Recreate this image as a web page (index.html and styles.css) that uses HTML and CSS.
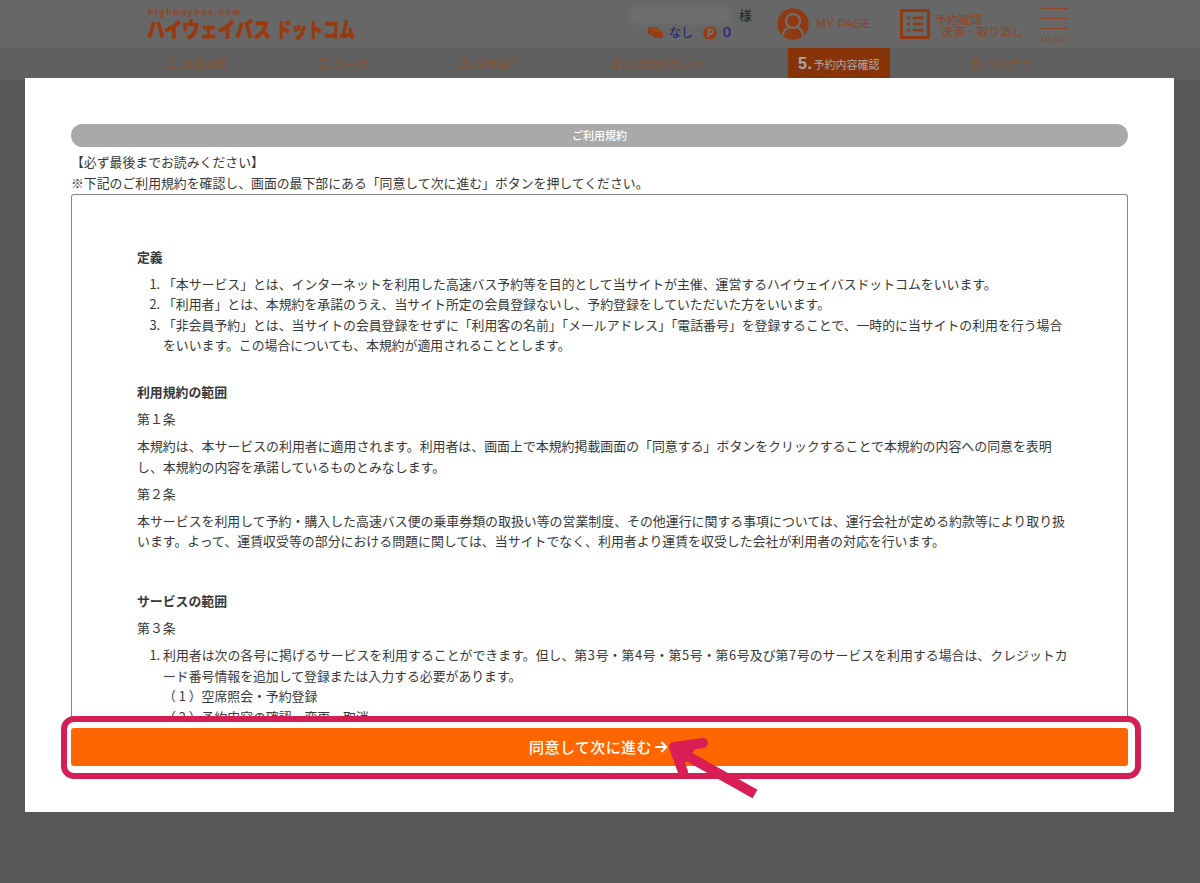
FILE: index.html
```html
<!DOCTYPE html>
<html lang="ja">
<head>
<meta charset="utf-8">
<title>ハイウェイバス ドットコム</title>
<link rel="stylesheet" href="styles.css">
</head>
<body>
<header class="header">
  <div class="logo">
    <span class="logo-sub">highwaybus.com</span>
    <svg class="logo-name" width="212" height="24" viewBox="0 0 212 24"><text x="1" y="20" textLength="124" lengthAdjust="spacingAndGlyphs">ハイウェイバス</text><text x="130" y="20" textLength="79" lengthAdjust="spacingAndGlyphs">ドットコム</text></svg>
  </div>
  <div class="user">
    <div class="user-name"><span class="smudge"></span><span>様</span></div>
    <div class="user-points">
      <svg class="ticket" width="15" height="11" viewBox="0 0 15 11"><path d="M0 0h10v2H3v5H0zM2.5 2.5h10v2h-7v4h-3zM5 5h10v6H5z"/><path d="M3.2 7V2.3H10M5 9V4.7h8" fill="none" stroke="#676767" stroke-width=".4"/></svg>
      <span class="none">なし</span>
      <svg class="point" width="14" height="14" viewBox="0 0 14 14"><circle cx="7" cy="7" r="6.8"/><path d="M5.4 11V3.7h2.3a2 2 0 0 1 0 4.1H5.4" fill="none" stroke="#777" stroke-width="1.7"/></svg>
      <span class="zero">0</span>
    </div>
  </div>
  <div class="mypage">
    <svg width="32" height="32" viewBox="0 0 32 32"><circle cx="16" cy="16" r="15.7" fill="#8f3a12"/><g fill="none" stroke="#707070" stroke-width="2.2"><circle cx="16" cy="13" r="7"/><path d="M6 27.5c.5-5 3.500-7.500 6.500-8.500M26 27.500c-.5-5-3.500-7.500-6.500-8.500"/></g></svg>
    <span>MY PAGE</span>
  </div>
  <div class="confirm">
    <svg width="30" height="30" viewBox="0 0 30 30"><path d="M1.500 1.500h27v27h-27z" fill="none" stroke="#8f3a12" stroke-width="3"/><path d="M7 7.500h3v2.500H7zM13 7.500h10v2.500H13zM7 13.700h3v2.500H7zM13 13.700h10v2.500H13zM7 20h3v2.500H7zM13 20h10v2.500H13z" fill="#8f3a12"/></svg>
    <div class="confirm-text"><span>予約確認</span><span class="indent">決済・取り消し</span></div>
  </div>
  <div class="menu"><i></i><i></i><i></i><span>MENU</span></div>
</header>
<nav class="steps">
  <div class="step s1"><b>1.</b>路線検索</div>
  <div class="step s2"><b>2.</b>便一覧</div>
  <div class="step s3"><b>3.</b>座席条件</div>
  <div class="step s4"><b>4.</b>お客様情報入力</div>
  <div class="step s5 current"><b>5.</b>予約内容確認</div>
  <div class="step s6"><b>6.</b>予約完了</div>
</nav>
<main class="modal">
  <h1 class="title">ご利用規約</h1>
  <p class="lead"><span class="line">【必ず最後までお読みください】</span><span class="line">※下記のご利用規約を確認し、画面の最下部にある「同意して次に進む」ボタンを押してください。</span></p>
  <div class="terms">
    <section class="t1">
      <h2>定義</h2>
      <ol>
        <li><span class="line">「本サービス」とは、インターネットを利用した高速バス予約等を目的として当サイトが主催、運営するハイウェイバスドットコムをいいます。</span></li>
        <li><span class="line">「利用者」とは、本規約を承諾のうえ、当サイト所定の会員登録ないし、予約登録をしていただいた方をいいます。</span></li>
        <li><span class="line">「非会員予約」とは、当サイトの会員登録をせずに「利用客の名前」「メールアドレス」「電話番号」を登録することで、一時的に当サイトの利用を行う場合</span><span class="line">をいいます。この場合についても、本規約が適用されることとします。</span></li>
      </ol>
    </section>
    <section class="t2">
      <h2>利用規約の範囲</h2>
      <p>第１条</p>
      <p><span class="line">本規約は、本サービスの利用者に適用されます。利用者は、画面上で本規約掲載画面の「同意する」ボタンをクリックすることで本規約の内容への同意を表明</span><span class="line">し、本規約の内容を承諾しているものとみなします。</span></p>
      <p>第２条</p>
      <p><span class="line">本サービスを利用して予約・購入した高速バス便の乗車券類の取扱い等の営業制度、その他運行に関する事項については、運行会社が定める約款等により取り扱</span><span class="line">います。よって、運賃収受等の部分における問題に関しては、当サイトでなく、利用者より運賃を収受した会社が利用者の対応を行います。</span></p>
    </section>
    <section class="t3">
      <h2>サービスの範囲</h2>
      <p>第３条</p>
      <ol>
        <li><span class="line digits">利用者は次の各号に掲げるサービスを利用することができます。但し、第<b>3</b>号・第<b>4</b>号・第<b>5</b>号・第<b>6</b>号及び第<b>7</b>号のサービスを利用する場合は、クレジットカ</span><span class="line">ード番号情報を追加して登録または入力する必要があります。</span><span class="line item">（<b>1</b>）空席照会・予約登録</span><span class="line item">（<b>2</b>）予約内容の確認、変更、取消</span></li>
      </ol>
    </section>
  </div>
  <button class="agree"><span>同意して次に進む</span><svg width="14" height="14" viewBox="0 0 14 14"><path d="M1 7h11M7.300 2l5 5-5 5" fill="none" stroke="#fff" stroke-width="2"/></svg></button>
  <div class="highlight"></div>
  <svg class="pointer" width="100" height="70" viewBox="0 0 100 70"><g fill="none" stroke="#d81e55"><path d="M14 14L94 59" stroke-width="10"/><path d="M22 37L13 12L42 8" stroke-width="10" stroke-linecap="round" stroke-linejoin="round"/></g><path d="M11 10L37 10L24 28z" fill="#d81e55"/></svg>
</main>
</body>
</html>
```
FILE: styles.css
```css
* { box-sizing: border-box; }
body { margin: 0; height: 883px; overflow: hidden; background: #585858; color: #383838; font-family: "Noto Sans CJK JP", sans-serif; font-size: 12.87px; line-height: 20.5px; position: relative; }
h1, h2, p, ol { margin: 0; padding: 0; }
svg { display: block; flex: none; }
.header { height: 48px; background: #676767; color: #8f4424; display: flex; align-items: flex-start; padding-left: 147px; white-space: nowrap; }
.logo { width: 481px; padding-top: 7px; }
.logo-sub { display: block; font: bold 8.3px/10px "Liberation Sans", sans-serif; letter-spacing: 1.9px; padding-left: 1px; }
.logo-name { margin-left: -1px; overflow: visible; }
.logo-name text { font-size: 21px; font-weight: 900; fill: #993a0e; stroke: #993a0e; stroke-width: .7px; stroke-linejoin: round; }
.user { width: 149px; padding-top: 5px; }
.user-name { display: flex; align-items: center; height: 20px; color: #222; gap: 5px; }
.smudge { width: 106px; height: 17px; border-radius: 10px; background: #6d6d6d; filter: blur(3px); }
.user-points { display: flex; align-items: center; height: 15px; padding-left: 20px; color: #17177c; }
.ticket, .point { fill: #993a12; }
.none { margin: 0 10px 0 6px; font-size: 12px; }
.zero { margin-left: 6px; font: 14px/15px "Liberation Sans", sans-serif; }
.mypage { width: 123px; padding-top: 8px; display: flex; align-items: center; gap: 7px; font: 12px "Liberation Sans", sans-serif; letter-spacing: .2px; }
.confirm { width: 141px; padding-top: 9px; display: flex; gap: 5px; }
.confirm-text { display: flex; flex-direction: column; font-size: 11.8px; line-height: 12px; padding-top: 4px; }
.indent { padding-left: 6px; }
.menu { width: 27px; padding-top: 8px; display: flex; flex-direction: column; gap: 9px; }
.menu i { height: 1px; background: #8f4424; }
.menu span { font: 8px/8px "Liberation Sans", sans-serif; letter-spacing: .7px; margin-top: -2px; }
.steps { height: 32px; background: #5f5f5f; color: #80583f; display: flex; padding-left: 167px; font-size: 11px; line-height: 32px; white-space: nowrap; }
.step { display: flex; }
.step b { font: bold 16px/31px "Liberation Sans", sans-serif; letter-spacing: .6px; margin-right: 1px; }
.s1 { width: 152px; }
.s2 { width: 141px; }
.s3 { width: 152px; }
.s4 { width: 176px; }
.s5 { width: 102px; padding-left: 10px; }
.s6 { margin-left: 82px; }
.current { background: #873408; color: #aaa; }
.modal { position: absolute; left: 25px; top: 78px; width: 1149px; height: 734px; background: #fff; padding: 46px 46px 0; }
.title { height: 23px; border-radius: 12px; background: #a9a9a9; color: #fff; text-align: center; font-size: 11px; font-weight: 500; line-height: 23px; }
.lead { padding-top: 5px; height: 47px; }
.line { display: block; white-space: nowrap; }
.terms { height: 526px; overflow: hidden; border: 1px solid #888; border-bottom: 0; border-radius: 3px 3px 0 0; padding: 51.5px 0 0 65px; }
h2 { font-size: 12.87px; font-weight: 700; line-height: 20.5px; margin-bottom: 6.6px; }
.terms p { margin-bottom: 6.6px; font-size: 12.91px; }
ol { padding-left: 26px; }
.digits b, .item b { font-weight: 400; display: inline-block; text-align: center; width: 8.4px; }
.digits { letter-spacing: .035px; }
.item b { width: 12.87px; }
.t2 { margin-top: 26.4px; }
.t3 { margin-top: 39px; }
.agree { display: flex; width: 100%; height: 38px; margin-top: 8px; border: 0; padding: 0 2px 0 0; border-radius: 3px; background: #ff6600; color: #fff; align-items: center; justify-content: center; gap: 2px; font: 500 15px/38px "Noto Sans CJK JP", sans-serif; letter-spacing: .4px; }
.highlight { position: absolute; left: 36px; top: 638px; width: 1080px; height: 63px; border: 6px solid #d41f55; border-radius: 13px; }
.pointer { position: absolute; left: 636px; top: 657px; }
```
